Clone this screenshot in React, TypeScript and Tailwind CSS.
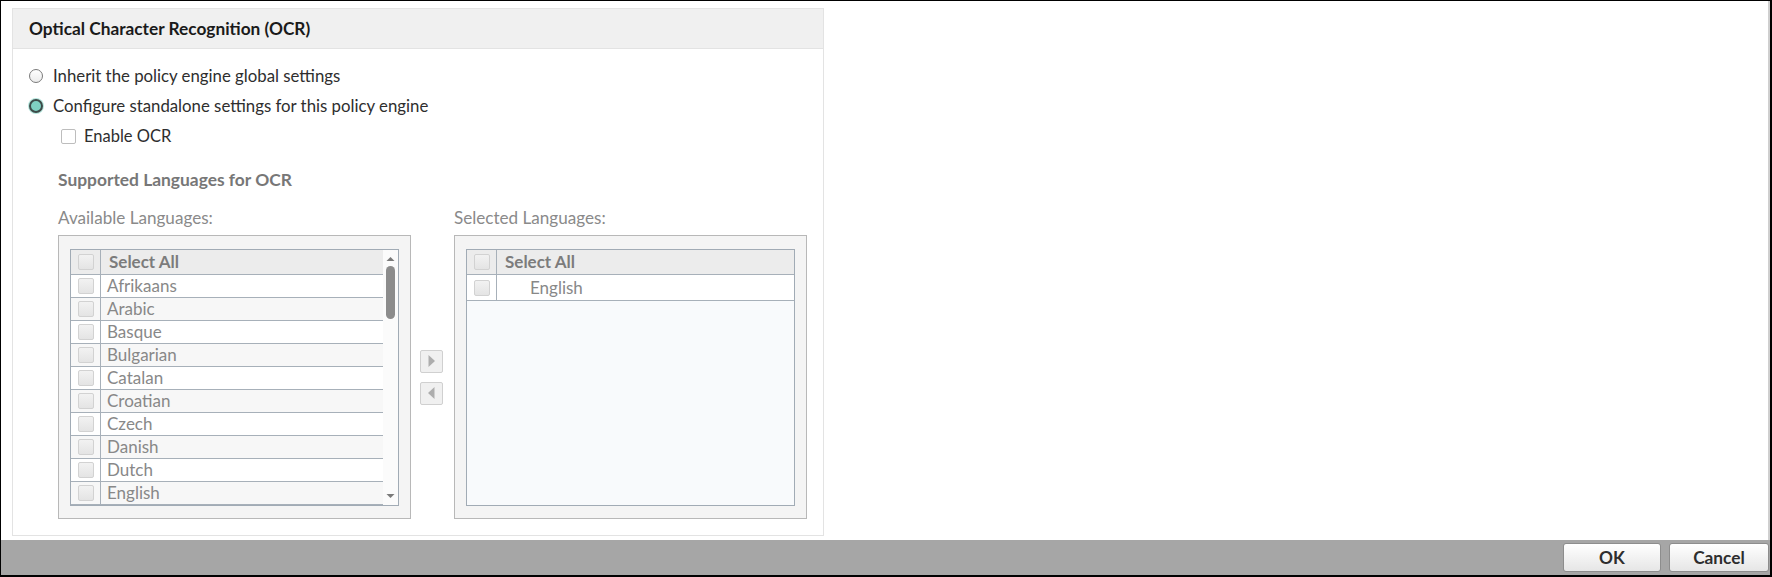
import React from "react";

const languages = [
  "Afrikaans",
  "Arabic",
  "Basque",
  "Bulgarian",
  "Catalan",
  "Croatian",
  "Czech",
  "Danish",
  "Dutch",
  "English",
];

function Box() {
  return (
    <div className="w-[16px] h-[16px] rounded-[2px] border border-[#d2d2d2] bg-gradient-to-b from-[#f2f2f2] to-[#e4e4e4]" />
  );
}

function HeaderRow() {
  return (
    <div className="flex h-[25px] shrink-0 border-b border-[#a7b0b9] bg-[#ececec]">
      <div className="w-[30px] shrink-0 border-r border-[#a7b0b9] flex items-center justify-center">
        <Box />
      </div>
      <div className="pl-[8px] flex items-center text-[17px] font-bold text-[#7c7c7c]">Select All</div>
    </div>
  );
}

function ItemRow({ label, alt }: { label: string; alt: boolean }) {
  return (
    <div
      className={
        alt
          ? "flex h-[23px] shrink-0 border-b border-[#a7b0b9] bg-[#f7f7f7]"
          : "flex h-[23px] shrink-0 border-b border-[#a7b0b9] bg-white"
      }
    >
      <div className="w-[30px] shrink-0 border-r border-[#a7b0b9] flex items-center justify-center">
        <Box />
      </div>
      <div className="pl-[6px] flex items-center text-[17px] text-[#888888]">{label}</div>
    </div>
  );
}

function ArrowBtn({ dir }: { dir: "right" | "left" }) {
  return (
    <div className="w-[23px] h-[23px] rounded-[2px] border border-[#d0d0d0] bg-[#f0f0f0] flex items-center justify-center">
      <svg width="9" height="14" viewBox="0 0 9 14">
        {dir === "right" ? (
          <path d="M1.5 1 L8 7 L1.5 13 Z" fill="#adadad" />
        ) : (
          <path d="M7.5 1 L1 7 L7.5 13 Z" fill="#adadad" />
        )}
      </svg>
    </div>
  );
}

export default function App() {
  return (
    <div className="w-[1772px] h-[577px] border-l border-t border-r-2 border-b-2 border-black bg-white flex flex-col font-[Lato,'Noto_Sans',sans-serif] overflow-hidden">
      <div className="flex-1 flex min-h-0">
        <div className="flex-1 min-w-0">
          <div className="ml-[11px] mt-[7px] w-[812px] h-[528px] border border-[#e3e3e3] flex flex-col">
            <div className="h-[40px] shrink-0 bg-[#f0f0f0] border-b border-[#e3e3e3] flex items-center pl-[16px] text-[17.3px] font-bold text-[#1a1a1a]">
              Optical Character Recognition (OCR)
            </div>
            <div className="pt-[12px] flex flex-col">
              <div className="h-[30px] flex items-center pl-[16px] gap-[10px]">
                <div className="w-[14px] h-[14px] rounded-full border border-[#7a7a7a] bg-gradient-to-b from-[#ffffff] to-[#ececec]" />
                <span className="text-[16.8px] text-[#2e2e2e]">Inherit the policy engine global settings</span>
              </div>
              <div className="h-[30px] flex items-center pl-[16px] gap-[10px]">
                <div className="w-[14px] h-[14px] rounded-full border-2 border-[#3d4b49] bg-[#7fd0c2] shadow-[0_0_0_1px_#b5e6dd]" />
                <span className="text-[16.8px] text-[#2e2e2e]">Configure standalone settings for this policy engine</span>
              </div>
              <div className="h-[30px] flex items-center pl-[48px] gap-[8px]">
                <div className="w-[15px] h-[15px] rounded-[2px] border border-[#bdbdbd] bg-white" />
                <span className="text-[16.5px] text-[#2e2e2e]">Enable OCR</span>
              </div>

              <div className="pl-[45px] flex flex-col">
                <div className="mt-[19px] h-[20px] leading-[20px] text-[17.4px] font-bold text-[#777777]">
                  Supported Languages for OCR
                </div>
                <div className="flex mt-[18px]">
                  <div className="w-[353px] flex flex-col">
                    <div className="h-[20px] leading-[20px] text-[17.1px] text-[#8a8a8a]">Available Languages:</div>
                    <div className="mt-[7px] w-[353px] h-[284px] border border-[#b8b8b8] bg-[#f4f4f4] pt-[13px] px-[11px]">
                      <div className="w-[329px] h-[257px] border border-[#a1abb5] flex overflow-hidden bg-white">
                        <div className="flex-1 flex flex-col min-w-0">
                          <HeaderRow />
                          {languages.map((l, i) => (
                            <ItemRow key={l} label={l} alt={i % 2 === 1} />
                          ))}
                        </div>
                        <div className="w-[15px] shrink-0 bg-[#fbfbfb] flex flex-col items-center">
                          <svg width="9" height="6" viewBox="0 0 9 6" className="mt-[6px]">
                            <path d="M0.5 5 L4.5 1 L8.5 5 Z" fill="#7a7a7a" />
                          </svg>
                          <div className="mt-[4px] w-[9px] h-[53px] rounded-full bg-[#8c8c8c]" />
                          <div className="flex-1" />
                          <svg width="9" height="6" viewBox="0 0 9 6" className="mb-[6px]">
                            <path d="M0.5 1 L4.5 5 L8.5 1 Z" fill="#7a7a7a" />
                          </svg>
                        </div>
                      </div>
                    </div>
                  </div>

                  <div className="w-[43px] flex flex-col">
                    <div className="h-[27px]" />
                    <div className="h-[284px] flex flex-col items-center justify-center gap-[9px] pr-[2px]">
                      <ArrowBtn dir="right" />
                      <ArrowBtn dir="left" />
                    </div>
                  </div>

                  <div className="w-[353px] flex flex-col">
                    <div className="h-[20px] leading-[20px] text-[17.1px] text-[#8a8a8a]">Selected Languages:</div>
                    <div className="mt-[7px] w-[353px] h-[284px] border border-[#b8b8b8] bg-[#f4f4f4] pt-[13px] px-[11px]">
                      <div className="w-[329px] h-[257px] border border-[#a1abb5] flex flex-col overflow-hidden bg-[#f8fafc]">
                        <HeaderRow />
                        <div className="flex h-[26px] shrink-0 border-b border-[#a7b0b9] bg-white">
                          <div className="w-[30px] shrink-0 border-r border-[#a7b0b9] flex items-center justify-center">
                            <Box />
                          </div>
                          <div className="pl-[33px] flex items-center text-[17px] text-[#888888]">English</div>
                        </div>
                      </div>
                    </div>
                  </div>
                </div>
              </div>
            </div>
          </div>
        </div>
        <div className="w-[2px] shrink-0 bg-[#cfcfcf]" />
      </div>
      <div className="h-[35px] shrink-0 bg-[#a6a6a6] flex items-center justify-end gap-[8px] pr-[1px]">
        <button className="w-[98px] h-[29px] rounded-[3px] border border-[#8d8d8d] bg-gradient-to-b from-[#ffffff] to-[#e6e6e6] text-[17.3px] font-bold text-[#2e2e2e]">
          OK
        </button>
        <button className="w-[100px] h-[29px] rounded-[3px] border border-[#8d8d8d] bg-gradient-to-b from-[#ffffff] to-[#e6e6e6] text-[17.3px] font-bold text-[#2e2e2e]">
          Cancel
        </button>
      </div>
    </div>
  );
}
